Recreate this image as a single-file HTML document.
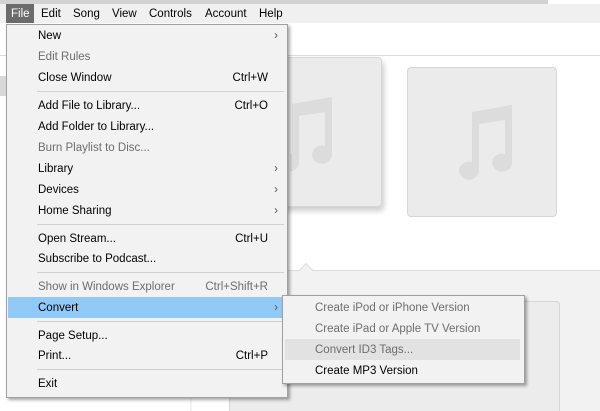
<!DOCTYPE html>
<html style="overflow:hidden"><head><style>
*{margin:0;padding:0;box-sizing:border-box}
html,body{width:600px;height:411px;overflow:hidden}
body{background:#fff;font-family:"Liberation Sans",sans-serif;font-size:11.5px;position:relative;color:#000}
.abs{position:absolute}
.mb span{position:absolute;top:5px;height:19px;line-height:19px}
.menu{position:absolute;background:#f2f2f2;border:1px solid #a0a0a0;box-shadow:2px 2px 3px rgba(0,0,0,.35)}
.it{position:absolute;left:0;right:0;height:21px;line-height:23px;padding-left:31px}
.dis{color:#6d6d6d}
.sc{position:absolute;right:19px;top:0}
.ar{position:absolute;right:9px;top:0;color:#555}
.sep{position:absolute;left:30px;right:3px;height:1px;background:#d0d0d0}
.card{position:absolute;background:#ebebeb;border:1px solid #d6d6d6;border-radius:4px}
</style></head><body>
<div class="abs" style="left:0;top:0;width:548px;height:4px;background:#d2d2d2"></div>
<div class="abs" style="left:0;top:4px;width:600px;height:19px;background:#f0f0f0"></div>
<div class="abs" style="left:0;top:55px;width:600px;height:1px;background:#ddd"></div>
<div class="abs" style="left:0;top:76px;width:8px;height:20px;background:#d8d8d8"></div>
<div class="abs" style="left:190px;top:270px;width:410px;height:141px;background:#f2f2f2;border-top:1px solid #ddd"></div>
<div class="abs" style="left:301px;top:265px;width:10px;height:10px;background:#f2f2f2;border-left:1px solid #ddd;border-top:1px solid #ddd;transform:rotate(45deg)"></div>
<div class="abs" style="left:192px;top:300px;width:37px;height:111px;background:#fff"></div>
<div class="card" style="left:229px;top:301px;width:331px;height:110px;background:#ececec;border-bottom:none;border-radius:4px 4px 0 0"></div>
<div class="card" style="left:240px;top:57px;width:142px;height:150px;box-shadow:2px 4px 6px rgba(0,0,0,.2)"></div>
<div class="card" style="left:407px;top:67px;width:150px;height:150px"></div>
<svg class="abs" style="left:450px;top:100px" width="80" height="85" viewBox="0 0 80 85"><path d="M22 12 L62 5 L62 62 A10 9 0 1 1 55 54 L55 20 L29 24 L29 70 A10 9 0 1 1 22 62 Z" fill="#dcdcdc"/></svg>
<svg class="abs" style="left:290px;top:92px" width="60" height="85" viewBox="0 0 60 85"><path d="M2 12 L42 5 L42 62 A10 9 0 1 1 35 54 L35 20 L9 24 L9 70 A10 9 0 1 1 2 62 Z" fill="#dcdcdc"/></svg>
<div class="mb">
<div class="abs" style="left:6px;top:4px;width:28px;height:19px;background:#6b6b6b"></div>
<span style="left:11px;color:#fff">File</span><span style="left:41px">Edit</span><span style="left:73px">Song</span><span style="left:112px">View</span><span style="left:149px">Controls</span><span style="left:205px">Account</span><span style="left:259px">Help</span>
</div>
<div class="menu" style="left:6px;top:24px;width:282px;height:374px">
<div class="it" style="top:0">New<span class="ar">›</span></div>
<div class="it dis" style="top:21px">Edit Rules</div>
<div class="it" style="top:42px">Close Window<span class="sc">Ctrl+W</span></div>
<div class="sep" style="top:66px"></div>
<div class="it" style="top:70px">Add File to Library...<span class="sc">Ctrl+O</span></div>
<div class="it" style="top:91px">Add Folder to Library...</div>
<div class="it dis" style="top:112px">Burn Playlist to Disc...</div>
<div class="it" style="top:133px">Library<span class="ar">›</span></div>
<div class="it" style="top:154px">Devices<span class="ar">›</span></div>
<div class="it" style="top:175px">Home Sharing<span class="ar">›</span></div>
<div class="sep" style="top:199px"></div>
<div class="it" style="top:203px">Open Stream...<span class="sc">Ctrl+U</span></div>
<div class="it" style="top:223px">Subscribe to Podcast...</div>
<div class="sep" style="top:247px"></div>
<div class="it dis" style="top:251px">Show in Windows Explorer<span class="sc">Ctrl+Shift+R</span></div>
<div class="it" style="top:272px;left:1px;right:5px;background:#91c9f7;padding-left:30px">Convert<span class="ar" style="right:4px">›</span></div>
<div class="sep" style="top:296px"></div>
<div class="it" style="top:300px">Page Setup...</div>
<div class="it" style="top:320px">Print...<span class="sc">Ctrl+P</span></div>
<div class="sep" style="top:344px"></div>
<div class="it" style="top:348px">Exit</div>
</div>
<div class="menu" style="left:282px;top:295px;width:243px;height:89px">
<div class="it dis" style="top:1px;padding-left:32px">Create iPod or iPhone Version</div>
<div class="it dis" style="top:22px;padding-left:32px">Create iPad or Apple TV Version</div>
<div class="it dis" style="top:43px;left:2px;right:4px;background:#e2e2e2;padding-left:30px">Convert ID3 Tags...</div>
<div class="it" style="top:64px;padding-left:32px">Create MP3 Version</div>
</div>
</body></html>
